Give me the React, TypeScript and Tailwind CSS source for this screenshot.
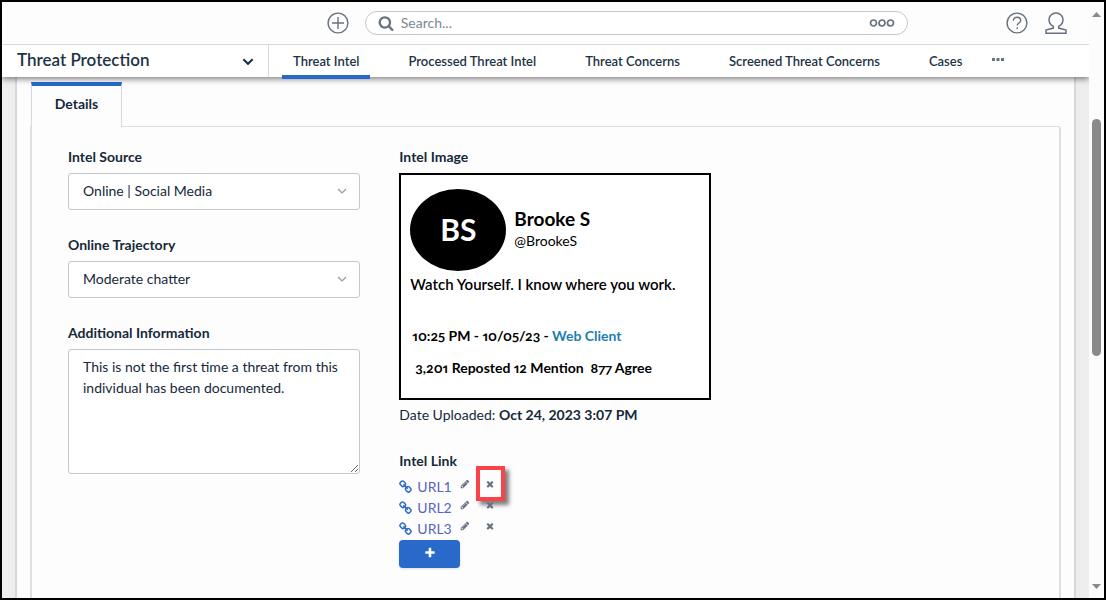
import React from "react";

type IconProps = { className?: string };

const glyph = (d: string) =>
  function Glyph({ className }: IconProps) {
    return (
      <svg viewBox="0 0 1792 1792" fill="currentColor" aria-hidden="true" className={className}>
        <path d={d} />
      </svg>
    );
  };

const SearchIcon = glyph(
  "M1216 832q0-185-131.500-316.500t-316.500-131.500-316.500 131.500-131.500 316.500 131.500 316.500 316.500 131.500 316.500-131.500 131.500-316.500zm512 832q0 52-38 90t-90 38q-54 0-90-38l-343-342q-179 124-399 124-143 0-273.500-55.500t-225-150-150-225-55.500-273.500 55.500-273.500 150-225 225-150 273.500-55.500 273.500 55.500 225 150 150 225 55.500 273.500q0 220-124 399l343 343q37 37 37 90z"
);
const ChainIcon = glyph(
  "M1456 1216q0-40-28-68l-208-208q-28-28-68-28-42 0-72 32 3 3 19 18.500t21.500 21.500 15 19 13 25.500 3.500 27.500q0 40-28 68t-68 28q-15 0-27.500-3.500t-25.500-13-19-15-21.500-21.500-18.500-19q-33 31-33 73 0 40 28 68l206 207q27 27 68 27 40 0 68-26l147-146q28-28 28-67zM753 511q0-40-28-68l-206-207q-28-28-68-28-39 0-68 27l-147 146q-28 28-28 67 0 40 28 68l208 208q27 27 68 27 42 0 72-31-3-3-19-18.500t-21.500-21.500-15-19-13-25.500-3.500-27.500q0-40 28-68t68-28q15 0 27.500 3.500t25.500 13 19 15 21.500 21.500 18.500 19q33-31 33-73zM1648 1216q0 120-85 203l-147 146q-83 83-203 83-121 0-204-85l-206-207q-83-83-83-203 0-123 88-209l-88-88q-86 88-208 88-120 0-204-84l-208-208q-84-84-84-204t85-203l147-146q83-83 203-83 121 0 204 85l206 207q83 83 83 203 0 123-88 209l88 88q86-88 208-88 120 0 204 84l208 208q84 84 84 204z"
);
const TimesIcon = glyph(
  "M1490 1322q0 40-28 68l-136 136q-28 28-68 28t-68-28l-294-294-294 294q-28 28-68 28t-68-28l-136-136q-28-28-28-68t28-68l294-294-294-294q-28-28-28-68t28-68l136-136q28-28 68-28t68 28l294 294 294-294q28-28 68-28t68 28l136 136q28 28 28 68t-28 68l-294 294 294 294q28 28 28 68z"
);
const PlusIcon = glyph(
  "M1600 736v192q0 40-28 68t-68 28h-416v416q0 40-28 68t-68 28h-192q-40 0-68-28t-28-68v-416h-416q-40 0-68-28t-28-68v-192q0-40 28-68t68-28h416v-416q0-40 28-68t68-28h192q40 0 68 28t28 68v416h416q40 0 68 28t28 68z"
);
const PencilIcon = glyph(
  "M491 1536l91-91-235-235-91 91v107h128v128h107zm523-928q0-22-22-22-10 0-17 7l-542 542q-7 7-7 17 0 22 22 22 10 0 17-7l542-542q7-7 7-17zm-54-192l416 416-832 832h-416v-416zm683 96q0 53-37 90l-166 166-416-416 166-165q36-38 90-38 53 0 91 38l235 234q37 39 37 91z"
);

function Chevron({ className }: IconProps) {
  return (
    <svg viewBox="0 0 10 6" fill="none" stroke="currentColor" aria-hidden="true" className={className}>
      <path d="M1 1l4 4 4-4" />
    </svg>
  );
}

function TopBar() {
  return (
    <div className="flex h-[43px] items-center border-b border-[#d5d8dc] bg-[#fdfdfd] pr-[22px] text-[#66727f]">
      <div className="w-[30.500%] shrink-0" />
      <button type="button" aria-label="Create" className="shrink-0">
        <svg viewBox="0 0 22 22" fill="none" stroke="currentColor" strokeWidth="1.4" className="size-[22px]">
          <circle cx="11" cy="11" r="9.9" />
          <path d="M11 5v12M5 11h12" />
        </svg>
      </button>
      <div className="ml-4 flex h-6 w-[51%] items-center rounded-full border border-[#c4c8cc] bg-white px-3">
        <SearchIcon className="size-4 shrink-0" />
        <input aria-label="Search" placeholder="Search..." className="ml-[7px] min-w-0 flex-1 bg-transparent text-sm outline-none placeholder:text-[#7c8792]" />
        <button type="button" aria-label="Search options">
          <svg viewBox="0 0 26 8" fill="none" stroke="currentColor" strokeWidth="1.7" className="h-2 w-[26px]">
            <circle cx="4.500" cy="4" r="3" />
            <circle cx="13" cy="4" r="3" />
            <circle cx="21.500" cy="4" r="3" />
          </svg>
        </button>
      </div>
      <div className="ml-auto flex gap-[17px]">
        <button type="button" aria-label="Help">
          <svg viewBox="0 0 22 22" fill="none" stroke="currentColor" strokeWidth="1.4" className="size-[22px]">
            <circle cx="11" cy="11" r="9.9" />
            <path d="M7.300 8.800c0-2.200 1.600-3.600 3.700-3.600s3.700 1.300 3.700 3.200c0 2.500-3.500 2.700-3.500 5.200" />
            <path d="M11.200 15.200v1.700" />
          </svg>
        </button>
        <button type="button" aria-label="Account">
          <svg viewBox="0 0 22 22" fill="none" stroke="currentColor" strokeWidth="1.5" className="size-[22px]">
            <path d="M8.300 14.300C5.600 12.800 4 10.400 4 7.700 4 4 7 1.100 11 1.100s7 2.900 7 6.600c0 2.700-1.600 5.100-4.300 6.600v1.800l7.300 1.900v3.200H1v-3.200l7.300-1.900z" />
          </svg>
        </button>
      </div>
    </div>
  );
}

const tabs = ["Threat Intel", "Processed Threat Intel", "Threat Concerns", "Screened Threat Concerns", "Cases"];

function NavBar() {
  return (
    <div className="flex h-8 bg-white text-[#1d3344]">
      <button type="button" className="flex w-[267px] shrink-0 items-center justify-between border-r border-[#d5d8dc] pl-[15px] pr-[14px] text-[17px] font-semibold leading-7">
        <span className="pb-0.5">Threat Protection</span>
        <Chevron className="h-[7px] w-3 stroke-[1.800]" />
      </button>
      <nav className="flex items-stretch gap-[27px] pl-[13px] text-[13px] font-semibold">
        {tabs.map((tab, i) => (
          <a key={tab} href="#" className="relative flex items-center whitespace-nowrap px-[11px]">
            {tab}
            {i === 0 && <span className="absolute inset-x-0 -bottom-0.5 h-1 bg-[#2869c9]" />}
          </a>
        ))}
      </nav>
      <button type="button" aria-label="More" className="ml-[19px] self-center pb-1">
        <svg viewBox="0 0 12 3" fill="#66727f" className="h-[3px] w-3">
          <path d="M0 0h3v3H0zM4.500 0h3v3h-3zM9 0h3v3H9z" />
        </svg>
      </button>
    </div>
  );
}

const labelClass = "mb-1.5 block text-sm font-bold leading-5";

function SelectField({ id, label, value }: { id: string; label: string; value: string }) {
  return (
    <div>
      <label htmlFor={id} className={labelClass}>{label}</label>
      <div className="relative">
        <select id={id} className="h-[37px] w-full appearance-none rounded-[3px] border border-[#c5c8cb] bg-white px-3.5 pb-0.5 text-sm">
          <option>{value}</option>
        </select>
        <Chevron className="pointer-events-none absolute right-[13px] top-[15px] h-1.5 w-2.5 stroke-[1.200] text-[#909aa3]" />
      </div>
    </div>
  );
}

function PostImage() {
  return (
    <figure>
      <div className="h-[227px] w-[312px] border-2 border-black bg-white px-[9px] pt-3.5 text-sm font-bold leading-5 text-black oldstyle-nums proportional-nums">
        <div className="flex items-center gap-2">
          <div className="flex h-[82px] w-24 items-center justify-center rounded-[50%] bg-black pb-0.5 text-[30px] text-white">BS</div>
          <div className="pb-[3px]">
            <div className="text-[19px] leading-6">Brooke S</div>
            <div className="font-normal leading-5">@BrookeS</div>
          </div>
        </div>
        <p className="mt-[3px] whitespace-nowrap text-[15px] font-semibold leading-5">Watch Yourself. I know where you work.</p>
        <p className="mt-8 pl-0.5">
          10:25 PM - 10/05/23 - <span className="text-[#1c7eb2]">Web Client</span>
        </p>
        <p className="mt-3 whitespace-pre pl-[5px]">3,201 Reposted 12 Mention  877 Agree</p>
      </div>
      <figcaption className="mt-[5px] leading-5">
        Date Uploaded: <b>Oct 24, 2023 3:07 PM</b>
      </figcaption>
    </figure>
  );
}

function LinkRow({ name, marked }: { name: string; marked: boolean }) {
  return (
    <li className="flex h-[21px] items-center">
      <a href="#" className="flex w-[61px] items-center gap-1 text-[#2869c9]">
        <ChainIcon className="size-3.5" />
        <span className="text-[#5863c0]">{name}</span>
      </a>
      <button type="button" aria-label={`Edit ${name}`} className="pb-1.5 text-[#66727f]">
        <PencilIcon className="size-2.5" />
      </button>
      <button type="button" aria-label={`Remove ${name}`} className="relative ml-[15px] pb-1.5 text-[#66727f]">
        <TimesIcon className="size-2.5" />
        {marked && (
          <span className="absolute -left-[9px] -top-[13px] h-[35px] w-[29px] border-4 border-[#fa4349] shadow-[4px_4px_4px_rgba(0,0,0,0.5)]" />
        )}
      </button>
    </li>
  );
}

function ScrollTrack() {
  return (
    <div className="flex w-[15px] shrink-0 flex-col items-center justify-between bg-[#fcfcfc] py-[9px]">
      <svg viewBox="0 0 9 5" fill="#8a8a8a" className="mt-px h-[5px] w-[9px]"><path d="M4.500 0L9 5H0z" /></svg>
      <div className="flex w-full flex-1 flex-col items-center pt-[102px]">
        <div className="h-[51%] w-[9px] rounded-full bg-[#8a8a8a]" />
      </div>
      <svg viewBox="0 0 9 5" fill="#8a8a8a" className="h-[5px] w-[9px]"><path d="M0 0h9L4.500 5z" /></svg>
    </div>
  );
}

export default function App() {
  return (
    <div className="flex h-screen border-2 border-black bg-[#eeeeee] font-['Lato','Noto_Sans',sans-serif] text-sm text-[#16293a]">
      <div className="flex min-w-0 flex-1 flex-col overflow-hidden">
        <header className="relative z-10 shadow-[0_2px_6px_rgba(0,0,0,0.5)]">
          <TopBar />
          <NavBar />
        </header>
        <main className="flex min-h-0 flex-1 flex-col overflow-hidden px-[13px]">
          <div className="flex flex-1 flex-col border-x-2 border-[#d5d8dc] bg-[#fdfdfd] px-[13px] pt-[5px]">
            <div className="flex pl-px">
              <button type="button" className="z-[1] -mb-px h-[45px] w-[91px] border-x border-t-4 border-x-[#d5d8dc] border-t-[#2869c9] bg-[#fdfdfd] pb-1.5 font-bold">
                Details
              </button>
            </div>
            <section className="grid flex-1 grid-cols-3 content-start gap-x-[39px] rounded-tr-[3px] border-x-2 border-t border-[#dddfe0] px-9 pt-5">
              <form className="flex flex-col gap-[25px]">
                <SelectField id="source" label="Intel Source" value="Online | Social Media" />
                <SelectField id="trajectory" label="Online Trajectory" value="Moderate chatter" />
                <div>
                  <label htmlFor="info" className={labelClass}>Additional Information</label>
                  <textarea
                    id="info"
                    className="block h-[125px] w-full resize rounded-[3px] border border-[#c5c8cb] bg-white px-3.5 py-1.5 text-sm leading-[21px]"
                    defaultValue="This is not the first time a threat from this individual has been documented."
                  />
                </div>
              </form>
              <div className="col-span-2">
                <h2 className={labelClass}>Intel Image</h2>
                <PostImage />
                <h2 className="mb-[5px] mt-[26px] text-sm font-bold leading-5">Intel Link</h2>
                <ul>
                  {["URL1", "URL2", "URL3"].map((name, i) => (
                    <LinkRow key={name} name={name} marked={i === 0} />
                  ))}
                </ul>
                <button type="button" aria-label="Add link" className="mt-px flex h-7 w-[61px] items-center justify-center rounded-sm bg-[#2869c9] pb-0.5 text-white shadow-sm">
                  <PlusIcon className="size-3" />
                </button>
              </div>
            </section>
          </div>
        </main>
      </div>
      <ScrollTrack />
    </div>
  );
}
